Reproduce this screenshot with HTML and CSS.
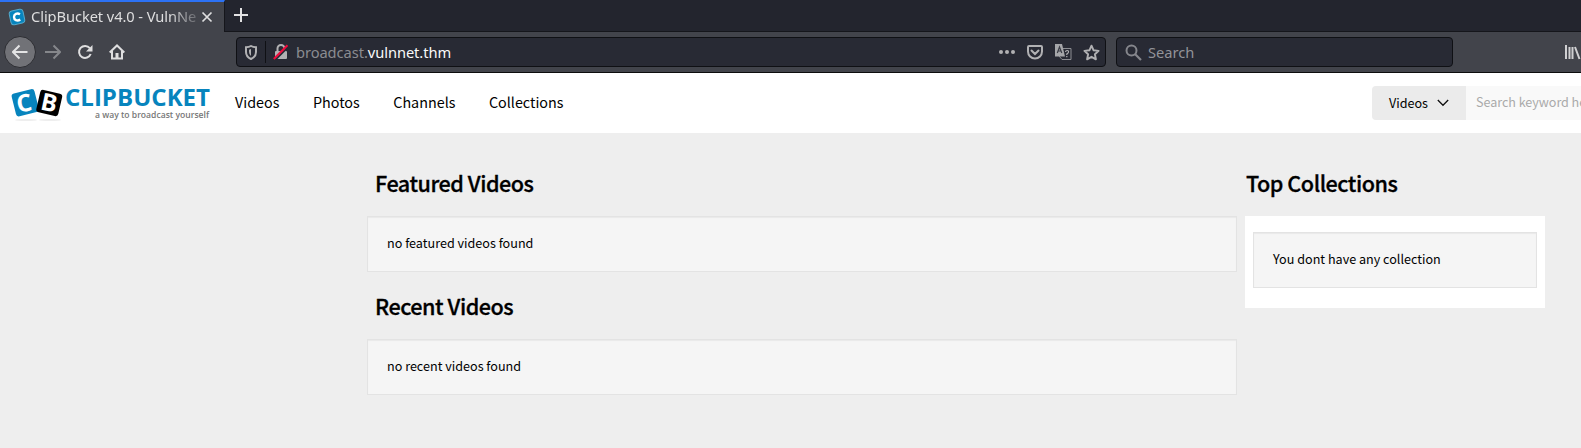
FILE: index.html
```html
<!DOCTYPE html>
<html lang="en">
<head>
<meta charset="utf-8">
<title>ClipBucket v4.0 - VulnNet</title>
<link rel="stylesheet" href="styles.css">
</head>
<body>
<div class="tabs">
  <div class="tab">
    <svg class="favicon" width="18" height="18" viewBox="0 0 18 18"><rect x="2" y="2" width="14" height="14" rx="3" fill="#0784bd" stroke="#54a9cc" transform="rotate(-12 9 9)"/><path d="M12 6.200C9 4.600 6 6 6 9s3 4.500 6.300 2.600" fill="none" stroke="#fff" stroke-width="2.400"/></svg>
    <span class="tab-title">ClipBucket v4.0 - VulnNe</span>
    <svg class="close" width="12" height="12" viewBox="0 0 12 12"><path d="M1.500 1.500l9 9m0-9l-9 9" stroke="#dededf" stroke-width="1.700"/></svg>
  </div>
  <svg class="plus" width="14" height="14" viewBox="0 0 14 14"><path d="M7 0v14M0 7h14" stroke="#e2e2e3" stroke-width="2"/></svg>
</div>
<div class="toolbar">
  <div class="nav-buttons">
    <span class="back"><svg width="16" height="16" viewBox="0 0 16 16"><path d="M15.500 8H1.500M7.500 1.500L1 8l6.500 6.500" fill="none" stroke="#e4e4e5" stroke-width="2"/></svg></span>
    <svg class="forward" width="16" height="16" viewBox="0 0 16 16"><path d="M0 8h14M8.500 1.500L15 8l-6.500 6.500" fill="none" stroke="#85878b" stroke-width="2"/></svg>
    <svg class="reload" width="16" height="16" viewBox="0 0 16 16"><path d="M12.800 4.200A6 6 0 1 0 13.700 10" fill="none" stroke="#dededf" stroke-width="2"/><path d="M15.500 1v6.500H9z" fill="#dededf"/></svg>
    <svg class="home" width="16" height="16" viewBox="0 0 16 16"><path d="M.7 8.500L8 1.500l7.300 7" fill="none" stroke="#dededf" stroke-width="2"/><path d="M3 7v7.500h10V7" fill="none" stroke="#dededf" stroke-width="2"/><path d="M6.500 14V9h3v5z" fill="#dededf"/></svg>
  </div>
  <div class="urlbar">
    <svg class="shield" width="12" height="15" viewBox="0 0 12 15"><path d="M1 2.200Q4 2.200 6 1q2 1.200 5 1.200V7q0 4.700-5 7Q1 11.700 1 7z" fill="none" stroke="#b1b1b3" stroke-width="2"/><path d="M6 4v7q-2-1.500-2-4V4.700z" fill="#b1b1b3"/></svg>
    <span class="divider"></span>
    <svg class="lock" width="16" height="16" viewBox="0 0 16 16"><path d="M4.500 7V4.500a3.500 3.500 0 0 1 7 0V7" fill="none" stroke="#b1b1b3" stroke-width="2"/><rect x="2" y="7" width="12" height="8" rx="1" fill="#b1b1b3"/><path d="M2 16L15.500 2.500" stroke="#282a34" stroke-width="2"/><path d="M.8 15L14.500 1.300" stroke="#f20a3c" stroke-width="2"/></svg>
    <span class="url"><span class="sub">broadcast.</span>vulnnet.thm</span>
    <svg class="dots" width="16" height="6" viewBox="0 0 16 6"><g fill="#b1b1b3"><circle cx="2" cy="3" r="2"/><circle cx="8" cy="3" r="2"/><circle cx="14" cy="3" r="2"/></g></svg>
    <svg class="pocket" width="16" height="15" viewBox="0 0 16 15"><path d="M2 1h12q1 0 1 1v4.500a7 7 0 0 1-14 0V2q0-1 1-1z" fill="none" stroke="#b1b1b3" stroke-width="2"/><path d="M4.500 5.500L8 9l3.500-3.500" fill="none" stroke="#b1b1b3" stroke-width="2" stroke-linecap="round"/></svg>
    <svg class="translate" width="17" height="16" viewBox="0 0 17 16"><path d="M8 4.500h8v11H7L4 12" fill="none" stroke="#8d8e93"/><path d="M0 0h7l3 12.500H0z" fill="#a5a6a9"/><path d="M2.300 9L4.500 3l2.300 6M3 7h3.300" fill="none" stroke="#3b3d46" stroke-width="1.200"/><path d="M10.500 8q.2-1.500 1.700-1.500T13.500 8q0 1-1.700 2v1M11.800 12v1.200" fill="none" stroke="#b1b1b3" stroke-width="1.200"/></svg>
    <svg class="star" width="17" height="17" viewBox="0 0 17 17"><path d="M8.500 1.700l2.100 4.600 5 .6-3.700 3.400 1 5-4.400-2.500-4.400 2.500 1-5L1.400 6.900l5-.6z" fill="none" stroke="#b1b1b3" stroke-width="1.900" stroke-linejoin="round"/></svg>
  </div>
  <div class="searchbar">
    <svg width="17" height="17" viewBox="0 0 17 17"><circle cx="6.500" cy="6.500" r="5" fill="none" stroke="#85868c" stroke-width="2"/><path d="M10 10l6 6" stroke="#85868c" stroke-width="2.200"/></svg>
    <span>Search</span>
  </div>
  <svg class="library" width="16" height="16" viewBox="0 0 16 16"><path d="M1 1v14M4.500 3v12M7.500 3v12M10 3l4.500 12" stroke="#d0d0d2" stroke-width="2"/></svg>
</div>
<header class="site-header">
  <svg class="logo" width="204" height="38" viewBox="0 0 204 38">
    <ellipse cx="15" cy="34" rx="11" ry="1" fill="#eee"/><ellipse cx="39" cy="34" rx="11" ry="1" fill="#eee"/>
    <rect x="2.500" y="5" width="23.500" height="23.500" rx="3" fill="#0784bd" transform="rotate(-14 14.200 16.700)"/>
    <rect x="27" y="5.500" width="22.500" height="23" rx="3" fill="#000" transform="rotate(13 38.200 17)"/>
    <text class="logo-letter" x="5.500" y="25.500" transform="rotate(-10 13 17)">C</text>
    <text class="logo-letter" x="30" y="25" transform="rotate(12 37 17)">B</text>
    <text class="logo-name" x="54" y="20" textLength="145" lengthAdjust="spacingAndGlyphs">CLIPBUCKET</text>
    <text class="logo-tag" x="84" y="32" textLength="114" lengthAdjust="spacingAndGlyphs">a way to broadcast yourself</text>
  </svg>
  <nav class="menu"><a>Videos</a><a>Photos</a><a>Channels</a><a>Collections</a></nav>
  <div class="site-search">
    <div class="type">Videos<svg width="12" height="8" viewBox="0 0 12 8"><path d="M.8 1L6 6.300 11.200 1" fill="none" stroke="#111" stroke-width="1.300"/></svg></div>
    <div class="keyword">Search keyword here</div>
  </div>
</header>
<main class="content">
  <section class="videos">
    <h2>Featured Videos</h2>
    <div class="well">no featured videos found</div>
    <h2>Recent Videos</h2>
    <div class="well">no recent videos found</div>
  </section>
  <aside class="side">
    <h2>Top Collections</h2>
    <div class="panel"><div class="well">You dont have any collection</div></div>
  </aside>
</main>
</body>
</html>
```
FILE: styles.css
```css
* { box-sizing: border-box; }
body { margin: 0; width: 1581px; height: 448px; overflow: hidden; background: #eee; color: #000; font-family: "Noto Sans CJK SC", sans-serif; }
svg { display: block; flex: none; }

.tabs { display: flex; height: 32px; background: #23252e; border-bottom: 1px solid #15161b; font: 14.670px/20px "Noto Sans", sans-serif; }
.tab { display: flex; align-items: center; width: 225px; height: 32px; padding: 0 11px 2px 8px; background: #42444b; border-top: 2px solid #2c72f5; border-right: 1px solid #15161b; color: #dededf; }
.tab-title { width: 168px; margin-left: 5px; overflow: hidden; white-space: nowrap; letter-spacing: -.08px; mask-image: linear-gradient(to right, #000 138px, transparent 174px); }
.close { margin: 2px 0 0 3px; }
.favicon { margin-top: 1px; }
.plus { margin: 8px 0 0 9px; }

.toolbar { display: flex; align-items: center; height: 41px; background: #42444b; border-bottom: 1px solid #0c0c0d; font: 14.670px/20px "Noto Sans", sans-serif; }
.nav-buttons { display: flex; align-items: center; width: 236px; padding-left: 4px; }
.back { display: grid; place-items: center; width: 32px; height: 32px; border-radius: 50%; background: #717277; border: 1px solid #2c2d32; }
.forward { margin-left: 9px; }
.reload { margin-left: 16px; }
.home { margin-left: 16px; }
.urlbar, .searchbar { display: flex; align-items: center; height: 30px; background: #282a34; border: 1px solid #0f1014; border-radius: 4px; }
.urlbar { width: 870px; padding: 0 5px 0 8px; }
.divider { width: 1px; height: 22px; margin: 0 7px 0 8px; background: #0f1014; }
.url { flex: 1; margin-left: 7px; color: #f9f9fa; letter-spacing: -.06px; }
.sub { color: #8b8c91; }
.pocket { margin-left: 12px; }
.translate { margin-left: 12px; }
.star { margin-left: 11px; }
.searchbar { width: 337px; margin-left: 10px; padding-left: 8px; color: #929399; }
.searchbar span { margin-left: 6px; }
.library { margin-left: 112px; }

.site-header { display: flex; height: 60px; background: #fff; }
.logo { margin: 13px 0 0 11px; }
.logo-letter { font: bold 24px "Open Sans", sans-serif; fill: #fff; }
.logo-name { font: bold 24px "Open Sans", sans-serif; fill: #0784bd; }
.logo-tag { font: 600 9px "Open Sans", sans-serif; fill: #777; }
.menu { display: flex; gap: 33.500px; margin-left: 20px; font-size: 14.350px; line-height: 58px; }
.site-search { display: flex; width: 209px; height: 34px; margin: 13px 0 0 auto; overflow: hidden; border-radius: 4px 0 0 4px; font-size: 12.600px; line-height: 34px; white-space: nowrap; }
.type { display: flex; align-items: center; gap: 9px; width: 94px; flex: none; padding-left: 17px; background: #ebebeb; }
.keyword { flex: none; width: 160px; padding-left: 10px; background: #f9f9f9; color: #aaa; line-height: 32px; letter-spacing: -.05px; }

.content { display: flex; gap: 8px; padding: 29px 0 0 367px; }
.videos { width: 870px; }
.side { width: 300px; }
h2 { height: 54px; margin: 0; padding: 5px 0 0 8px; font-size: 21.600px; font-weight: 500; line-height: 32px; letter-spacing: -.47px; -webkit-text-stroke: .3px #000; }
.side h2 { padding-left: 1px; }
.well { height: 56px; padding-left: 19px; background: #f5f5f5; border: 1px solid #e3e3e3; box-shadow: inset 0 1px 1px rgba(0, 0, 0, .05); font-size: 12.600px; line-height: 52px; }
.videos .well { margin-bottom: 13px; }
.panel { height: 92px; padding: 16px 8px 20px; background: #fff; }
```
